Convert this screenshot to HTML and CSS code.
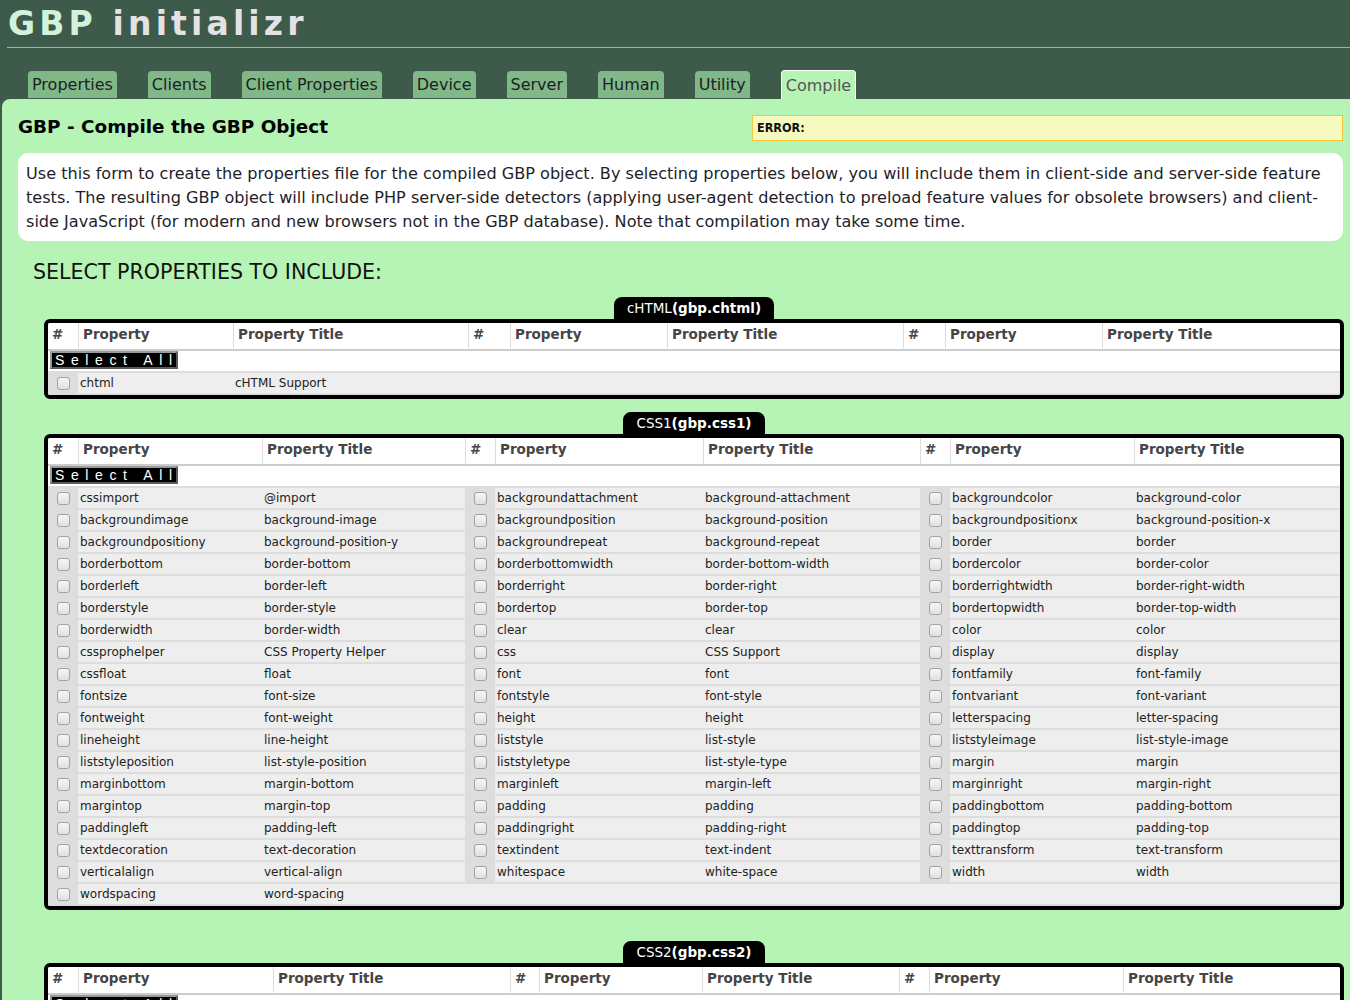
FILE: index.html
```html
<!DOCTYPE html>
<html>
<head>
<meta charset="utf-8">
<title>GBP initializr</title>
<link rel="stylesheet" href="styles.css">
</head>
<body>
<h1 class="logo"><span class="logo-gbp">GBP</span> initializr</h1>
<nav class="tabs">
  <a class="tab">Properties</a>
  <a class="tab">Clients</a>
  <a class="tab">Client Properties</a>
  <a class="tab">Device</a>
  <a class="tab">Server</a>
  <a class="tab">Human</a>
  <a class="tab">Utility</a>
  <a class="tab tab-active">Compile</a>
</nav>
<main class="panel">
  <div class="titlebar">
    <h2 class="page-title">GBP - Compile the GBP Object</h2>
    <div class="error-box">ERROR:</div>
  </div>
  <p class="intro">Use this form to create the properties file for the compiled GBP object. By selecting properties below, you will include them in client-side and server-side feature tests. The resulting GBP object will include PHP server-side detectors (applying user-agent detection to preload feature values for obsolete browsers) and client-side JavaScript (for modern and new browsers not in the GBP database). Note that compilation may take some time.</p>
  <h3 class="section-head">SELECT PROPERTIES TO INCLUDE:</h3>

  <section class="group">
    <div class="group-label">cHTML<b>(gbp.chtml)</b></div>
    <div class="tbl-box">
      <table class="props">
        <colgroup><col style="width:30px"><col style="width:155px"><col style="width:235px"><col style="width:42px"><col style="width:157px"><col style="width:236px"><col style="width:42px"><col style="width:157px"><col style="width:238px"></colgroup>
        <thead><tr><th>#</th><th>Property</th><th>Property Title</th><th>#</th><th>Property</th><th>Property Title</th><th>#</th><th>Property</th><th>Property Title</th></tr></thead>
        <tbody>
          <tr class="sel-row"><td colspan="9"><button class="sel-all">Select All</button></td></tr>
          <tr><td class="ck"><input type="checkbox" class="cb"></td><td>chtml</td><td>cHTML Support</td><td class="empty"></td><td class="empty"></td><td class="empty"></td><td class="empty"></td><td class="empty"></td><td class="empty"></td></tr>
        </tbody>
      </table>
    </div>
  </section>

  <section class="group">
    <div class="group-label">CSS1<b>(gbp.css1)</b></div>
    <div class="tbl-box">
      <table class="props">
        <colgroup><col style="width:30px"><col style="width:184px"><col style="width:203px"><col style="width:30px"><col style="width:208px"><col style="width:217px"><col style="width:30px"><col style="width:184px"><col style="width:206px"></colgroup>
        <thead><tr><th>#</th><th>Property</th><th>Property Title</th><th>#</th><th>Property</th><th>Property Title</th><th>#</th><th>Property</th><th>Property Title</th></tr></thead>
        <tbody>
          <tr class="sel-row"><td colspan="9"><button class="sel-all">Select All</button></td></tr>
          <tr><td class="ck"><input type="checkbox" class="cb"></td><td>cssimport</td><td>@import</td><td class="ck"><input type="checkbox" class="cb"></td><td>backgroundattachment</td><td>background-attachment</td><td class="ck"><input type="checkbox" class="cb"></td><td>backgroundcolor</td><td>background-color</td></tr>
          <tr><td class="ck"><input type="checkbox" class="cb"></td><td>backgroundimage</td><td>background-image</td><td class="ck"><input type="checkbox" class="cb"></td><td>backgroundposition</td><td>background-position</td><td class="ck"><input type="checkbox" class="cb"></td><td>backgroundpositionx</td><td>background-position-x</td></tr>
          <tr><td class="ck"><input type="checkbox" class="cb"></td><td>backgroundpositiony</td><td>background-position-y</td><td class="ck"><input type="checkbox" class="cb"></td><td>backgroundrepeat</td><td>background-repeat</td><td class="ck"><input type="checkbox" class="cb"></td><td>border</td><td>border</td></tr>
          <tr><td class="ck"><input type="checkbox" class="cb"></td><td>borderbottom</td><td>border-bottom</td><td class="ck"><input type="checkbox" class="cb"></td><td>borderbottomwidth</td><td>border-bottom-width</td><td class="ck"><input type="checkbox" class="cb"></td><td>bordercolor</td><td>border-color</td></tr>
          <tr><td class="ck"><input type="checkbox" class="cb"></td><td>borderleft</td><td>border-left</td><td class="ck"><input type="checkbox" class="cb"></td><td>borderright</td><td>border-right</td><td class="ck"><input type="checkbox" class="cb"></td><td>borderrightwidth</td><td>border-right-width</td></tr>
          <tr><td class="ck"><input type="checkbox" class="cb"></td><td>borderstyle</td><td>border-style</td><td class="ck"><input type="checkbox" class="cb"></td><td>bordertop</td><td>border-top</td><td class="ck"><input type="checkbox" class="cb"></td><td>bordertopwidth</td><td>border-top-width</td></tr>
          <tr><td class="ck"><input type="checkbox" class="cb"></td><td>borderwidth</td><td>border-width</td><td class="ck"><input type="checkbox" class="cb"></td><td>clear</td><td>clear</td><td class="ck"><input type="checkbox" class="cb"></td><td>color</td><td>color</td></tr>
          <tr><td class="ck"><input type="checkbox" class="cb"></td><td>cssprophelper</td><td>CSS Property Helper</td><td class="ck"><input type="checkbox" class="cb"></td><td>css</td><td>CSS Support</td><td class="ck"><input type="checkbox" class="cb"></td><td>display</td><td>display</td></tr>
          <tr><td class="ck"><input type="checkbox" class="cb"></td><td>cssfloat</td><td>float</td><td class="ck"><input type="checkbox" class="cb"></td><td>font</td><td>font</td><td class="ck"><input type="checkbox" class="cb"></td><td>fontfamily</td><td>font-family</td></tr>
          <tr><td class="ck"><input type="checkbox" class="cb"></td><td>fontsize</td><td>font-size</td><td class="ck"><input type="checkbox" class="cb"></td><td>fontstyle</td><td>font-style</td><td class="ck"><input type="checkbox" class="cb"></td><td>fontvariant</td><td>font-variant</td></tr>
          <tr><td class="ck"><input type="checkbox" class="cb"></td><td>fontweight</td><td>font-weight</td><td class="ck"><input type="checkbox" class="cb"></td><td>height</td><td>height</td><td class="ck"><input type="checkbox" class="cb"></td><td>letterspacing</td><td>letter-spacing</td></tr>
          <tr><td class="ck"><input type="checkbox" class="cb"></td><td>lineheight</td><td>line-height</td><td class="ck"><input type="checkbox" class="cb"></td><td>liststyle</td><td>list-style</td><td class="ck"><input type="checkbox" class="cb"></td><td>liststyleimage</td><td>list-style-image</td></tr>
          <tr><td class="ck"><input type="checkbox" class="cb"></td><td>liststyleposition</td><td>list-style-position</td><td class="ck"><input type="checkbox" class="cb"></td><td>liststyletype</td><td>list-style-type</td><td class="ck"><input type="checkbox" class="cb"></td><td>margin</td><td>margin</td></tr>
          <tr><td class="ck"><input type="checkbox" class="cb"></td><td>marginbottom</td><td>margin-bottom</td><td class="ck"><input type="checkbox" class="cb"></td><td>marginleft</td><td>margin-left</td><td class="ck"><input type="checkbox" class="cb"></td><td>marginright</td><td>margin-right</td></tr>
          <tr><td class="ck"><input type="checkbox" class="cb"></td><td>margintop</td><td>margin-top</td><td class="ck"><input type="checkbox" class="cb"></td><td>padding</td><td>padding</td><td class="ck"><input type="checkbox" class="cb"></td><td>paddingbottom</td><td>padding-bottom</td></tr>
          <tr><td class="ck"><input type="checkbox" class="cb"></td><td>paddingleft</td><td>padding-left</td><td class="ck"><input type="checkbox" class="cb"></td><td>paddingright</td><td>padding-right</td><td class="ck"><input type="checkbox" class="cb"></td><td>paddingtop</td><td>padding-top</td></tr>
          <tr><td class="ck"><input type="checkbox" class="cb"></td><td>textdecoration</td><td>text-decoration</td><td class="ck"><input type="checkbox" class="cb"></td><td>textindent</td><td>text-indent</td><td class="ck"><input type="checkbox" class="cb"></td><td>texttransform</td><td>text-transform</td></tr>
          <tr><td class="ck"><input type="checkbox" class="cb"></td><td>verticalalign</td><td>vertical-align</td><td class="ck"><input type="checkbox" class="cb"></td><td>whitespace</td><td>white-space</td><td class="ck"><input type="checkbox" class="cb"></td><td>width</td><td>width</td></tr>
          <tr><td class="ck"><input type="checkbox" class="cb"></td><td>wordspacing</td><td>word-spacing</td><td class="empty"></td><td class="empty"></td><td class="empty"></td><td class="empty"></td><td class="empty"></td><td class="empty"></td></tr>
        </tbody>
      </table>
    </div>
  </section>

  <section class="group group-spaced">
    <div class="group-label">CSS2<b>(gbp.css2)</b></div>
    <div class="tbl-box">
      <table class="props">
        <colgroup><col style="width:30px"><col style="width:195px"><col style="width:237px"><col style="width:29px"><col style="width:163px"><col style="width:197px"><col style="width:30px"><col style="width:194px"><col style="width:217px"></colgroup>
        <thead><tr><th>#</th><th>Property</th><th>Property Title</th><th>#</th><th>Property</th><th>Property Title</th><th>#</th><th>Property</th><th>Property Title</th></tr></thead>
        <tbody>
          <tr class="sel-row"><td colspan="9"><button class="sel-all">Select All</button></td></tr>
        </tbody>
      </table>
    </div>
  </section>
</main>
</body>
</html>
```

FILE: styles.css
```css
html, body {
  margin: 0;
  padding: 0;
}
body {
  background: #3d5a4a;
  font-family: "DejaVu Sans", Verdana, sans-serif;
  color: #222;
}

.logo {
  margin: 0 0 0 7px;
  padding-left: 1px;
  height: 47px;
  border-bottom: 1px solid #a7b0ab;
  font: bold 33px/47px "DejaVu Sans", sans-serif;
  letter-spacing: 4.15px;
  color: #e3e3e3;
}
.logo-gbp {
  color: #d3f2dd;
}

.tabs {
  display: flex;
  align-items: flex-end;
  gap: 31px;
  height: 51px;
  padding-left: 28px;
}
.tab {
  display: block;
  height: 27px;
  margin-bottom: 1px;
  padding: 0 4px;
  background: #80b888;
  border-radius: 4px 4px 0 0;
  font-size: 16px;
  line-height: 28px;
  color: #1d1d26;
}
.tab-active {
  height: 28px;
  margin-bottom: 0;
  background: #b5f4b5;
  border: 1px solid #fff;
  border-bottom: 0;
  color: #555;
  line-height: 30px;
}

.panel {
  margin-left: 2px;
  background: #b5f4b5;
  border-radius: 8px 0 0 0;
  padding: 16px 7px 60px 16px;
}

.titlebar {
  display: flex;
  align-items: center;
  height: 26px;
  margin-bottom: 12px;
}
.page-title {
  margin: 0 0 2px 0;
  font-size: 18.4px;
  font-weight: bold;
  line-height: 24px;
  color: #000;
}
.error-box {
  margin-left: auto;
  width: 591px;
  height: 26px;
  box-sizing: border-box;
  padding-left: 4px;
  background: #f7fabe;
  border: 1px solid #f3c73a;
  font: bold 12.5px/24px "DejaVu Sans Condensed", "DejaVu Sans", sans-serif;
  color: #111;
}

.intro {
  margin: 0;
  padding: 9px 8px 7px 8px;
  background: #fff;
  border-radius: 10px;
  font-size: 16.1px;
  line-height: 24px;
  color: #1e1e28;
}

.section-head {
  margin: 19px 0 11px 15px;
  font-size: 20.6px;
  font-weight: normal;
  line-height: 24px;
  color: #111;
}

.group {
  width: 1300px;
  margin: 13px 0 0 26px;
}
.group-spaced {
  margin-top: 31px;
}
.group-label {
  display: table;
  margin: 0 auto;
  height: 21px;
  padding: 0 13px;
  background: #000;
  color: #fff;
  border-radius: 8px 8px 0 0;
  font-size: 13.5px;
  line-height: 22px;
}

.tbl-box {
  border: 4px solid #000;
  border-radius: 6px;
  overflow: hidden;
  background: #ddd;
}
.props {
  width: 100%;
  table-layout: fixed;
  border-collapse: separate;
  border-spacing: 0;
}
.props th {
  height: 22px;
  padding: 0 0 4px 4px;
  background: #fff;
  border-left: 1px solid #ddd;
  border-bottom: 2px solid #ccc;
  text-align: left;
  font-size: 13.5px;
  font-weight: bold;
  color: #454545;
  white-space: nowrap;
}
.props th:first-child {
  border-left: 0;
}
.props td {
  height: 20px;
  padding: 0 0 0 2px;
  background: #eee;
  border-bottom: 2px solid #ddd;
  font-size: 12px;
  line-height: 20px;
  color: #222;
  white-space: nowrap;
  overflow: hidden;
}
.props td.ck {
  background: #ddd;
  padding: 0;
}
.props .sel-row td {
  background: #fff;
  padding: 0 2px;
  vertical-align: top;
}
.sel-all {
  display: block;
  width: 128px;
  height: 18px;
  box-sizing: border-box;
  margin: 0;
  padding: 0 0 1px 3px;
  background: #000;
  color: #fff;
  border: 2px solid;
  border-color: #9a9a9a #5a5a5a #5a5a5a #9a9a9a;
  font: 14px/14px "Liberation Sans", Arial, sans-serif;
  letter-spacing: 6.6px;
  text-align: left;
}

.cb {
  -webkit-appearance: none;
  appearance: none;
  display: block;
  width: 13px;
  height: 13px;
  margin: 0 auto;
  box-sizing: border-box;
  border: 1px solid #a3a3a3;
  border-radius: 3px;
  background: linear-gradient(#f6f6f6, #e0e0e0);
}
```
